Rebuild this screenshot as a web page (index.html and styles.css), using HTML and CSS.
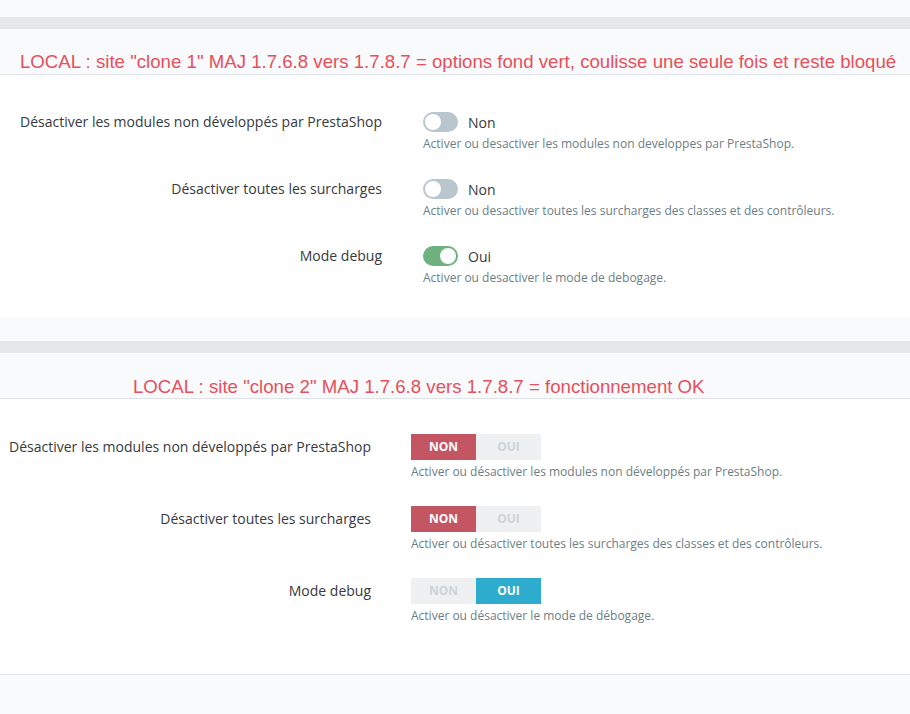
FILE: index.html
```html
<!DOCTYPE html>
<html lang="fr">
<head>
<meta charset="utf-8">
<title>Options PrestaShop</title>
<link rel="stylesheet" href="styles.css">
</head>
<body>
<div class="top-space"></div>
<div class="band"></div>
<div class="note note-1"><span>LOCAL : site "clone 1" MAJ 1.7.6.8 vers 1.7.8.7 = options fond vert, coulisse une seule fois et reste bloqué</span></div>
<div class="panel panel-1">
  <div class="row">
    <div class="label">Désactiver les modules non développés par PrestaShop</div>
    <div class="control">
      <div class="switch-line"><span class="switch"><span class="knob"></span></span><span class="state">Non</span></div>
      <div class="help">Activer ou desactiver les modules non developpes par PrestaShop.</div>
    </div>
  </div>
  <div class="row">
    <div class="label">Désactiver toutes les surcharges</div>
    <div class="control">
      <div class="switch-line"><span class="switch"><span class="knob"></span></span><span class="state">Non</span></div>
      <div class="help">Activer ou desactiver toutes les surcharges des classes et des contrôleurs.</div>
    </div>
  </div>
  <div class="row">
    <div class="label">Mode debug</div>
    <div class="control">
      <div class="switch-line"><span class="switch on"><span class="knob"></span></span><span class="state">Oui</span></div>
      <div class="help">Activer ou desactiver le mode de debogage.</div>
    </div>
  </div>
</div>
<div class="gap-space"></div>
<div class="band"></div>
<div class="note note-2"><span>LOCAL : site "clone 2" MAJ 1.7.6.8 vers 1.7.8.7 = fonctionnement OK</span></div>
<div class="panel panel-2">
  <div class="row">
    <div class="label">Désactiver les modules non développés par PrestaShop</div>
    <div class="control">
      <div class="seg"><span class="opt no active">NON</span><span class="opt">OUI</span></div>
      <div class="help">Activer ou désactiver les modules non développés par PrestaShop.</div>
    </div>
  </div>
  <div class="row">
    <div class="label">Désactiver toutes les surcharges</div>
    <div class="control">
      <div class="seg"><span class="opt no active">NON</span><span class="opt">OUI</span></div>
      <div class="help">Activer ou désactiver toutes les surcharges des classes et des contrôleurs.</div>
    </div>
  </div>
  <div class="row">
    <div class="label">Mode debug</div>
    <div class="control">
      <div class="seg"><span class="opt">NON</span><span class="opt yes active">OUI</span></div>
      <div class="help">Activer ou désactiver le mode de débogage.</div>
    </div>
  </div>
</div>
<div class="bottom-space"></div>
</body>
</html>
```

FILE: styles.css
```css
* { box-sizing: border-box; }
html, body { margin: 0; padding: 0; }
body {
  background: #f9fafc;
  font-family: "Open Sans", "Noto Sans", sans-serif;
  color: #363a41;
  width: 910px;
  height: 714px;
  overflow: hidden;
}
.top-space { height: 17px; }
.band { height: 12px; background: #e5e8ea; }
.gap-space { height: 23px; }
.note {
  height: 46px;
  display: flex;
  align-items: flex-end;
  border-bottom: 1px solid #dfe3e6;
  font-family: "Liberation Sans", Arial, sans-serif;
  font-size: 18.65px;
  line-height: 22px;
  color: #e6505a;
  white-space: nowrap;
}
.note-1 { padding-left: 20px; padding-bottom: 1px; }
.note-2 { padding-left: 133px; padding-bottom: 0; }
.panel { background: #ffffff; display: flex; flex-direction: column; }
.panel-1 { height: 243px; padding-top: 37px; gap: 27px; }
.panel-2 { height: 276px; padding-top: 35px; gap: 26px; border-bottom: 1px solid #e1e5e8; }
.row { display: flex; }
.label {
  text-align: right;
  font-size: 14px;
  color: #363a41;
  white-space: nowrap;
}
.panel-1 .label { width: 382px; line-height: 20px; margin-right: 41px; }
.panel-2 .label { width: 371px; line-height: 26px; margin-right: 40px; }
.control { display: flex; flex-direction: column; gap: 4px; }
.help {
  font-size: 12px;
  line-height: 16px;
  color: #6c7e86;
  white-space: nowrap;
}
.switch-line { display: flex; align-items: center; height: 20px; gap: 10px; }
.switch {
  width: 35px;
  height: 20px;
  border-radius: 10px;
  background: #b9c6cd;
  display: flex;
  align-items: center;
  padding: 0 2px;
}
.switch .knob {
  width: 16px;
  height: 16px;
  border-radius: 50%;
  background: #ffffff;
}
.switch.on { background: #6fb27f; justify-content: flex-end; }
.state { font-size: 14px; color: #363a41; }
.seg { display: flex; height: 26px; }
.opt {
  width: 65px;
  height: 26px;
  line-height: 26px;
  text-align: center;
  font-size: 12px;
  font-weight: 700;
  background: #eef0f2;
  color: #cdd3d7;
}
.opt.no.active { background: #c45663; color: #ffffff; }
.opt.yes.active { background: #2eacce; color: #ffffff; }
.bottom-space { height: 40px; }
```
